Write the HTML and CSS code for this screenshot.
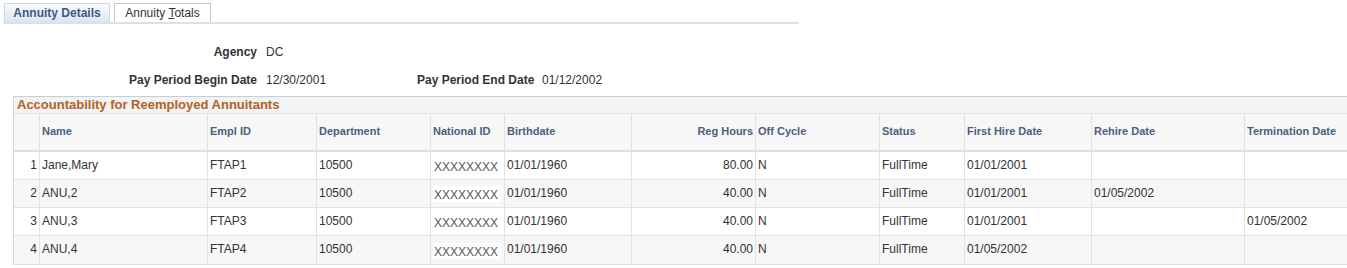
FILE: index.html
```html
<!DOCTYPE html>
<html>
<head>
<meta charset="utf-8">
<link rel="stylesheet" href="styles.css">
</head>
<body>
<div class="tabs">
  <div class="tab active">Annuity Details</div>
  <div class="tab second">Annuity <u>T</u>otals</div>
</div>
<div class="fields">
  <div class="lbl">Agency</div><div class="val">DC</div><div></div><div></div>
  <div class="lbl">Pay Period Begin Date</div><div class="val">12/30/2001</div>
  <div class="lbl">Pay Period End Date</div><div class="val v2">01/12/2002</div>
</div>
<div class="grid">
  <div class="title">Accountability for Reemployed Annuitants</div>
  <div class="cols head">
    <div class="c"></div><div class="c">Name</div><div class="c">Empl ID</div><div class="c">Department</div><div class="c">National ID</div><div class="c">Birthdate</div><div class="c r">Reg Hours</div><div class="c">Off Cycle</div><div class="c">Status</div><div class="c">First Hire Date</div><div class="c">Rehire Date</div><div class="c">Termination Date</div>
  </div>
  <div class="cols row">
    <div class="c r">1</div><div class="c">Jane,Mary</div><div class="c">FTAP1</div><div class="c">10500</div><div class="c"><span class="nid">XXXXXXXX</span></div><div class="c">01/01/1960</div><div class="c r">80.00</div><div class="c">N</div><div class="c">FullTime</div><div class="c">01/01/2001</div><div class="c"></div><div class="c"></div>
  </div>
  <div class="cols row alt">
    <div class="c r">2</div><div class="c">ANU,2</div><div class="c">FTAP2</div><div class="c">10500</div><div class="c"><span class="nid">XXXXXXXX</span></div><div class="c">01/01/1960</div><div class="c r">40.00</div><div class="c">N</div><div class="c">FullTime</div><div class="c">01/01/2001</div><div class="c">01/05/2002</div><div class="c"></div>
  </div>
  <div class="cols row">
    <div class="c r">3</div><div class="c">ANU,3</div><div class="c">FTAP3</div><div class="c">10500</div><div class="c"><span class="nid">XXXXXXXX</span></div><div class="c">01/01/1960</div><div class="c r">40.00</div><div class="c">N</div><div class="c">FullTime</div><div class="c">01/01/2001</div><div class="c"></div><div class="c">01/05/2002</div>
  </div>
  <div class="cols row alt">
    <div class="c r">4</div><div class="c">ANU,4</div><div class="c">FTAP4</div><div class="c">10500</div><div class="c"><span class="nid">XXXXXXXX</span></div><div class="c">01/01/1960</div><div class="c r">40.00</div><div class="c">N</div><div class="c">FullTime</div><div class="c">01/05/2002</div><div class="c"></div><div class="c"></div>
  </div>
</div>
</body>
</html>
```
FILE: styles.css
```css
html, body {
  margin: 0;
  padding: 0;
  background: #fff;
  overflow: hidden;
}
body {
  font-family: "Liberation Sans", Arial, sans-serif;
  font-size: 12px;
  color: #333;
  width: 1347px;
}
.tabs {
  display: flex;
  gap: 4px;
  width: 796px;
  margin-left: 3px;
  padding-top: 3px;
  padding-left: 1px;
  border-bottom: 2px solid #d7e2ef;
  box-sizing: border-box;
}
.tab {
  height: 19px;
  line-height: 18px;
  width: 97px;
  text-align: center;
  border: 1px solid #c6c6c6;
  border-bottom: none;
  box-sizing: border-box;
  background: #fff;
  color: #333;
  white-space: nowrap;
}
.tab.active {
  width: 106px;
  font-weight: bold;
  color: #3d5a80;
  border-color: #cdd8e5;
  background: linear-gradient(#fafcfe, #dbe5f1);
}
.fields {
  display: grid;
  grid-template-columns: 257px 160px 117px auto;
  grid-auto-rows: 28px;
  align-items: center;
  padding-top: 14px;
}
.lbl {
  font-weight: bold;
  text-align: right;
  white-space: nowrap;
}
.val {
  padding-left: 9px;
  white-space: nowrap;
}
.val.v2 {
  padding-left: 8px;
}
.grid {
  margin-top: 2px;
  margin-left: 13px;
  width: 1400px;
  border-left: 1px solid #d4d4d4;
  border-bottom: 1px solid #dcdcdc;
}
.title {
  height: 16px;
  line-height: 16px;
  padding-left: 3px;
  border-top: 1px solid #c9ced4;
  border-bottom: 1px solid #e4e6e8;
  background: #f1f3f5;
  color: #b5611f;
  font-weight: bold;
  font-size: 13px;
}
.cols {
  display: grid;
  grid-template-columns: 26px 168px 109px 114px 74px 127px 124px 124px 85px 127px 153px 169px;
}
.c {
  border-right: 1px solid #e2e2e2;
  padding: 0 2px;
  box-sizing: border-box;
  white-space: nowrap;
  overflow: hidden;
  display: flex;
  align-items: center;
}
.c.r {
  justify-content: flex-end;
}
.head {
  height: 38px;
  background: #f7f7f7;
  border-bottom: 2px solid #dedede;
  box-sizing: border-box;
}
.head .c {
  font-size: 11px;
  font-weight: bold;
  color: #4b5f80;
  padding-bottom: 2px;
}
.row {
  height: 28px;
  border-bottom: 1px solid #e2e2e2;
  box-sizing: border-box;
  background: #fff;
}
.row .c {
  padding-bottom: 2px;
}
.row:last-child {
  border-bottom: none;
}
.row.alt {
  background: #f7f7f7;
}
.nid {
  background: #fff;
  color: #555;
  padding: 2px 3px 0 1px;
  margin-top: 3px;
}
```
